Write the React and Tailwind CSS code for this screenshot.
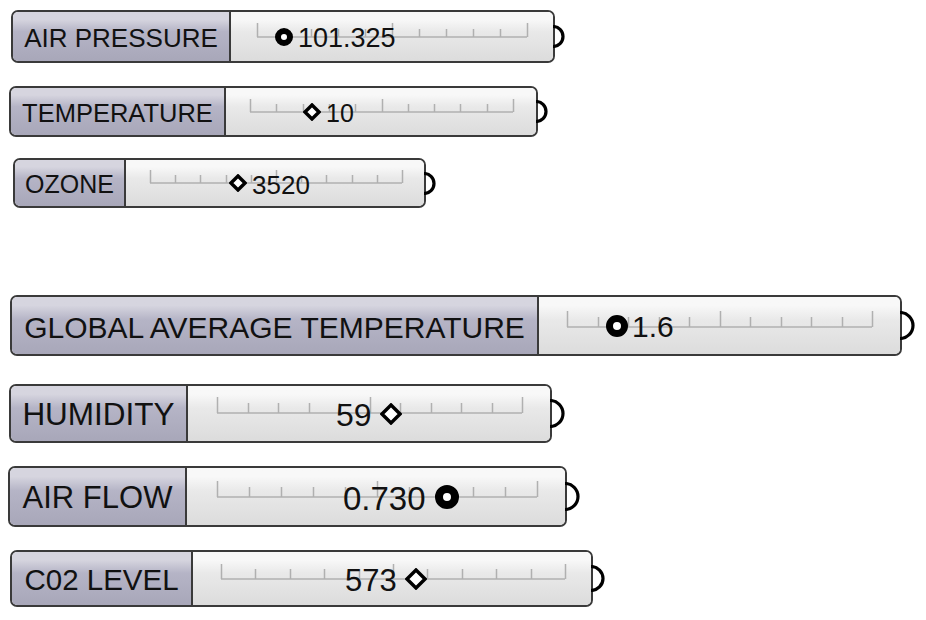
import React from "react";

// slider rows, measured off the canvas; rail = [x0, x1, y] inside the slider part
const rows = [
  {
    label: "AIR PRESSURE", value: "101.325", knob: "ring", knobSize: 18, after: false,
    row: "mt-[10px] ml-[11px]", box: "w-[544px] h-[53px]", side: "w-[218px] text-[26px]",
    group: "pl-[44px] gap-[5px] text-[27px]", rail: [26, 296, 25], ticks: [8, 14], r: 10,
  },
  {
    label: "TEMPERATURE", value: "10", knob: "diamond", knobSize: 18, after: false,
    row: "mt-[23px] ml-[9px]", box: "w-[529px] h-[51px]", side: "w-[215px] text-[25.5px]",
    group: "pl-[77px] gap-[5px] text-[25px]", rail: [24, 287, 24], ticks: [8, 13], r: 10,
  },
  {
    label: "OZONE", value: "3520", knob: "diamond", knobSize: 18, after: false,
    row: "mt-[21px] ml-[13px]", box: "w-[413px] h-[50px]", side: "w-[111px] text-[25px]",
    group: "pl-[103px] gap-[5px] text-[26px]", rail: [24, 276, 23], ticks: [8, 13], r: 10,
  },
  {
    label: "GLOBAL AVERAGE TEMPERATURE", value: "1.6", knob: "ring", knobSize: 22, after: false,
    row: "mt-[87px] ml-[10px]", box: "w-[892px] h-[61px]", side: "w-[527px] text-[30px]",
    group: "pl-[67px] gap-[4px] text-[30px]", rail: [28, 333, 30], ticks: [10, 16], r: 13,
  },
  {
    label: "HUMIDITY", value: "59", knob: "diamond", knobSize: 22, after: true,
    row: "mt-[28px] ml-[9px]", box: "w-[543px] h-[59px]", side: "w-[177px] text-[31.5px]",
    group: "pl-[148px] gap-[8px] text-[32px]", rail: [29, 334, 27], ticks: [10, 16], r: 13,
  },
  {
    label: "AIR FLOW", value: "0.730", knob: "ring", knobSize: 24, after: true,
    row: "mt-[23px] ml-[8px]", box: "w-[559px] h-[61px]", side: "w-[177px] text-[31px]",
    group: "pl-[156px] gap-[9px] text-[33px]", rail: [30, 350, 29], ticks: [10, 16], r: 13,
  },
  {
    label: "C02 LEVEL", value: "573", knob: "diamond", knobSize: 22, after: true,
    row: "mt-[23px] ml-[10px]", box: "w-[583px] h-[57px]", side: "w-[181px] text-[29.5px]",
    group: "pl-[152px] gap-[8px] text-[31px]", rail: [28, 372, 27], ticks: [10, 15], r: 12,
  },
];

function Rail({ rail, ticks }) {
  const [x0, x1, y] = rail;
  const step = (x1 - x0) / 10;
  return (
    <svg className="absolute inset-0 w-full h-full" aria-hidden="true">
      <line x1={x0} y1={y} x2={x1} y2={y} stroke="#b0b0b0" strokeWidth="1.5" />
      {Array.from({ length: 11 }).map((_, i) => {
        const x = Math.round(x0 + step * i) + 0.5;
        const tall = i === 0 || i === 5 || i === 10;
        return (
          <line key={i} x1={x} y1={y - (tall ? ticks[1] : ticks[0])} x2={x} y2={y}
            stroke="#b0b0b0" strokeWidth="1.5" />
        );
      })}
    </svg>
  );
}

function Knob({ type, size }) {
  if (type === "ring") {
    const sw = Math.round(size * 0.33);
    return (
      <svg width={size} height={size} className="shrink-0">
        <circle cx={size / 2} cy={size / 2} r={size / 2 - sw / 2} fill="#fff" stroke="#000" strokeWidth={sw} />
      </svg>
    );
  }
  const m = 2;
  const c = size / 2;
  return (
    <svg width={size} height={size} className="shrink-0">
      <polygon points={`${c},${m} ${size - m},${c} ${c},${size - m} ${m},${c}`}
        fill="#fff" stroke="#000" strokeWidth="3.4" strokeLinejoin="miter" />
    </svg>
  );
}

function Connector({ r }) {
  return (
    <svg width={r + 3} height={2 * r + 3} className="-ml-[2px] shrink-0">
      <path d={`M0 1.5 A ${r} ${r} 0 0 1 0 ${2 * r + 1.5}`} fill="none" stroke="#000" strokeWidth="3.2" />
    </svg>
  );
}

function Slider({ s }) {
  return (
    <div className={`flex items-center ${s.row}`}>
      <div className={`flex rounded-[7px] border-2 border-[#3a3a3a] overflow-hidden ${s.box}`}>
        <div className={`flex items-center justify-center pt-[3px] border-r-2 border-[#3a3a3a] text-[#111] bg-linear-to-b from-[#d6d5df] from-15% via-[#b5b4c6] via-40% to-[#a8a7b9] ${s.side}`}>
          {s.label}
        </div>
        <div className="relative flex-1 flex items-center bg-linear-to-b from-[#f8f8f8] from-15% via-[#e9e9e9] via-40% to-[#dcdcdc]">
          <Rail rail={s.rail} ticks={s.ticks} />
          <div className={`relative flex items-center text-[#111] ${s.group}`}>
            {!s.after && <Knob type={s.knob} size={s.knobSize} />}
            <span className="leading-none pt-[3px]">{s.value}</span>
            {s.after && <Knob type={s.knob} size={s.knobSize} />}
          </div>
        </div>
      </div>
      <Connector r={s.r} />
    </div>
  );
}

export default function App() {
  return (
    <div className="w-[926px] h-[620px] bg-white flex flex-col items-start font-['Liberation_Sans',Arial,sans-serif] overflow-hidden">
      {rows.map((s) => (
        <Slider key={s.label} s={s} />
      ))}
    </div>
  );
}
